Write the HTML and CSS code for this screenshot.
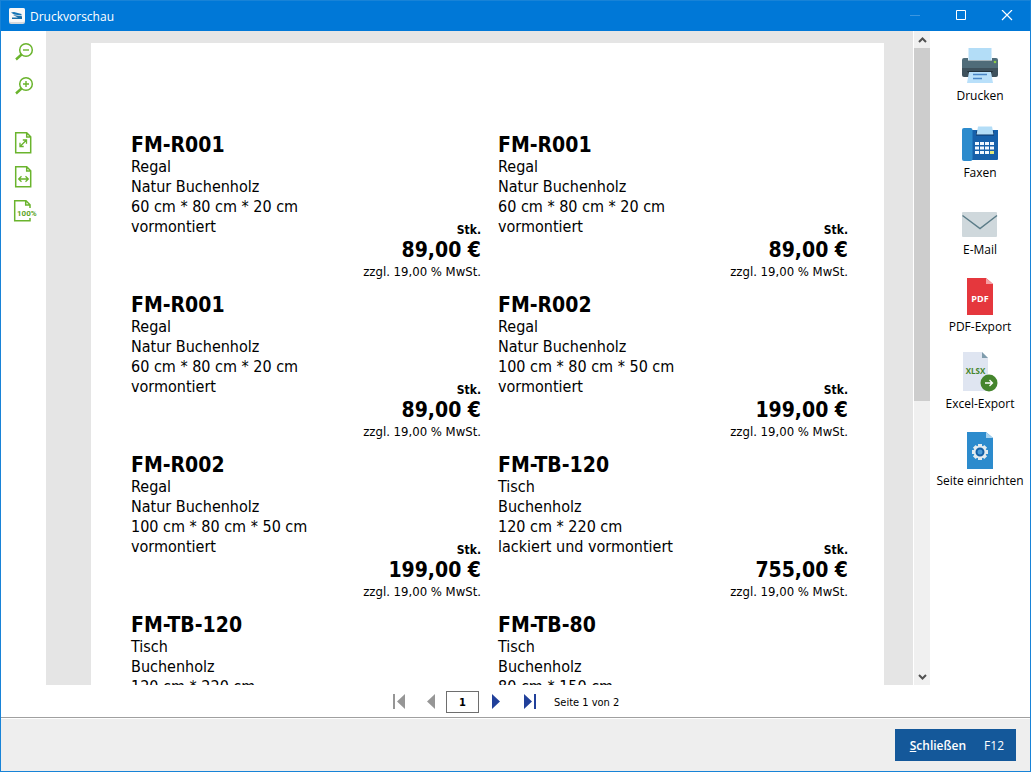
FILE: index.html
```html
<!DOCTYPE html>
<html lang="de">
<head>
<meta charset="utf-8">
<title>Druckvorschau</title>
<link rel="stylesheet" href="styles.css">
</head>
<body>
<div class="window">
  <header class="titlebar">
    <svg class="app-icon" viewBox="0 0 16 16"><rect width="16" height="16" rx="2" fill="#d5d9dc"/><rect width="16" height="14" rx="2" fill="#f8f8f8"/><path d="M2 4.500L5 4l7.500 2v1.500L5 6.500z" fill="#1674b5"/><path d="M4 7l9 1.200V11H3V9.500h6z" fill="#1b6fa8"/></svg>
    <h1 class="title">Druckvorschau</h1>
    <div class="window-controls">
      <button class="window-button" aria-label="Minimieren" disabled><svg viewBox="0 0 12 12"><path d="M1 5.500h10" stroke="#3b96e0"/></svg></button>
      <button class="window-button" aria-label="Maximieren"><svg viewBox="0 0 12 12"><path d="M1.500 .5h9v9h-9z" stroke="#fff"/></svg></button>
      <button class="window-button" aria-label="Fenster schließen"><svg viewBox="0 0 12 12"><path d="M1 0l10 10M11 0L1 10" stroke="#fff" stroke-width="1.200"/></svg></button>
    </div>
  </header>

  <main class="workspace">
    <nav class="zoom-tools" aria-label="Zoom">
      <button class="tool" aria-label="Verkleinern"><svg viewBox="0 0 24 24"><circle cx="14" cy="9" r="6.300" stroke-width="1.500"/><path d="M11 9h6" stroke-width="1.400"/><path d="M9.500 13.500L4 18.500" stroke-width="2.400"/></svg></button>
      <button class="tool" aria-label="Vergrößern"><svg viewBox="0 0 24 24"><circle cx="14" cy="9" r="6.300" stroke-width="1.500"/><path d="M11 9h6M14 6v6" stroke-width="1.400"/><path d="M9.500 13.500L4 18.500" stroke-width="2.400"/></svg></button>
      <button class="tool tool-page" aria-label="Ganze Seite"><svg viewBox="0 0 24 24"><path d="M3.700 1.700h11l4 4v16h-15zM14.700 2v4h4" stroke-width="1.500"/><path d="M8.500 15l5.500-5.500M10.800 9h3.700v3.700M8 11.800v3.700h3.700" stroke-width="1.300"/></svg></button>
      <button class="tool" aria-label="Seitenbreite"><svg viewBox="0 0 24 24"><path d="M3.700 1.700h11l4 4v16h-15zM14.700 2v4h4" stroke-width="1.500"/><path d="M7 14h9M9.500 11.300L6.700 14l2.800 2.700M13.500 11.300l2.800 2.700-2.800 2.700" stroke-width="1.300"/></svg></button>
      <button class="tool" aria-label="Originalgröße"><svg viewBox="0 0 24 24"><path d="M18 9V5.700l-4-4H2.700v20H18V19M13.700 2v4h4" stroke-width="1.500"/><text class="zoom-text" x="5" y="17">100%</text></svg></button>
    </nav>

    <div class="preview">
      <div class="viewport">
        <article class="paper">
          <section class="item">
            <div class="details"><h2 class="sku">FM-R001</h2><p>Regal</p><p>Natur Buchenholz</p><p>60 cm * 80 cm * 20 cm</p><p>vormontiert</p></div>
            <div class="pricing"><p class="unit">Stk.</p><p class="price">89,00 €</p><p class="tax">zzgl. 19,00 % MwSt.</p></div>
          </section>
          <section class="item">
            <div class="details"><h2 class="sku">FM-R001</h2><p>Regal</p><p>Natur Buchenholz</p><p>60 cm * 80 cm * 20 cm</p><p>vormontiert</p></div>
            <div class="pricing"><p class="unit">Stk.</p><p class="price">89,00 €</p><p class="tax">zzgl. 19,00 % MwSt.</p></div>
          </section>
          <section class="item">
            <div class="details"><h2 class="sku">FM-R001</h2><p>Regal</p><p>Natur Buchenholz</p><p>60 cm * 80 cm * 20 cm</p><p>vormontiert</p></div>
            <div class="pricing"><p class="unit">Stk.</p><p class="price">89,00 €</p><p class="tax">zzgl. 19,00 % MwSt.</p></div>
          </section>
          <section class="item">
            <div class="details"><h2 class="sku">FM-R002</h2><p>Regal</p><p>Natur Buchenholz</p><p>100 cm * 80 cm * 50 cm</p><p>vormontiert</p></div>
            <div class="pricing"><p class="unit">Stk.</p><p class="price">199,00 €</p><p class="tax">zzgl. 19,00 % MwSt.</p></div>
          </section>
          <section class="item">
            <div class="details"><h2 class="sku">FM-R002</h2><p>Regal</p><p>Natur Buchenholz</p><p>100 cm * 80 cm * 50 cm</p><p>vormontiert</p></div>
            <div class="pricing"><p class="unit">Stk.</p><p class="price">199,00 €</p><p class="tax">zzgl. 19,00 % MwSt.</p></div>
          </section>
          <section class="item">
            <div class="details"><h2 class="sku">FM-TB-120</h2><p>Tisch</p><p>Buchenholz</p><p>120 cm * 220 cm</p><p>lackiert und vormontiert</p></div>
            <div class="pricing"><p class="unit">Stk.</p><p class="price">755,00 €</p><p class="tax">zzgl. 19,00 % MwSt.</p></div>
          </section>
          <section class="item">
            <div class="details"><h2 class="sku">FM-TB-120</h2><p>Tisch</p><p>Buchenholz</p><p>120 cm * 220 cm</p></div>
          </section>
          <section class="item">
            <div class="details"><h2 class="sku">FM-TB-80</h2><p>Tisch</p><p>Buchenholz</p><p>80 cm * 150 cm</p></div>
          </section>
        </article>
      </div>
      <div class="scrollbar">
        <button class="scroll-button" aria-label="Nach oben"><svg viewBox="0 0 9 6"><path d="M1 5l3.500-3.500L8 5"/></svg></button>
        <div class="track"><div class="thumb"></div></div>
        <button class="scroll-button" aria-label="Nach unten"><svg viewBox="0 0 9 6"><path d="M1 1l3.500 3.500L8 1"/></svg></button>
      </div>
    </div>

    <nav class="pager" aria-label="Seiten">
      <button class="page-button" aria-label="Erste Seite" disabled><svg viewBox="0 0 16 16"><path d="M2 0h2v15H2zM14 0v15L6 7.500z"/></svg></button>
      <button class="page-button" aria-label="Vorherige Seite" disabled><svg viewBox="0 0 16 16"><path d="M12 0v15L4 7.500z"/></svg></button>
      <input class="page-input" aria-label="Seite" value="1">
      <button class="page-button" aria-label="Nächste Seite"><svg viewBox="0 0 16 16"><path d="M4 0v15l8-7.500z"/></svg></button>
      <button class="page-button" aria-label="Letzte Seite"><svg viewBox="0 0 16 16"><path d="M3 0v15l8-7.500zM13 0h2v15h-2z"/></svg></button>
      <span class="page-status">Seite 1 von 2</span>
    </nav>

    <aside class="actions">
      <button class="action"><svg viewBox="0 0 40 44"><path d="M8.500 4h23v12h-23z" fill="#b3ddf7"/><path d="M2 16q0-2 2-2h4v2.500h24V14h4q2 0 2 2v11H2z" fill="#506c79"/><path d="M2 24h36v7q0 2-2 2H4q-2 0-2-2z" fill="#3e515c"/><path d="M7 27h26l-2 3H9z" fill="#22313b"/><path d="M9 28h22l2 11H7z" fill="#b9e0fa"/><path d="M13 30.500h14M13 34.500h9" stroke="#4a86c6" stroke-width="1.500"/><circle cx="35" cy="18" r="1.300" fill="#8ccc45"/></svg><span>Drucken</span></button>
      <button class="action"><svg viewBox="0 0 40 44"><path d="M11 9h27v29q0 1-1 1H11z" fill="#1660aa"/><rect x="2" y="7" width="10.500" height="33" rx="2" fill="#2c8bcd"/><path d="M16 10.500h18V14.500H16z" fill="#0b3566"/><path d="M18 5.500h14l1.500 8h-17z" fill="#b3ddf7"/><path d="M15 21h4v3h-4zM20 21h4v3h-4zM25 21h4v3h-4zM30 21h4v3h-4zM15 25.500h4v3h-4zM20 25.500h4v3h-4zM25 25.500h4v3h-4zM30 25.500h4v3h-4zM15 30h4v3h-4zM20 30h4v3h-4zM25 30h4v3h-4z" fill="#f2f8ff"/><path d="M30 30h4v3h-4z" fill="#e3e77b"/></svg><span>Faxen</span></button>
      <button class="action"><svg viewBox="0 0 40 44"><rect x="2" y="14" width="35" height="25" rx="1" fill="#cfd8dc"/><path d="M2.500 17.500L20 30.500l17-13" fill="none" stroke="#5b7c88" stroke-width="1.500"/></svg><span>E-Mail</span></button>
      <button class="action"><svg viewBox="0 0 40 44"><path d="M7 3h19l7 6v31H7z" fill="#e5373d"/><path d="M26 3l7 6h-7z" fill="#f59fa4"/><text class="pdf-text" x="20" y="27">PDF</text></svg><span>PDF-Export</span></button>
      <button class="action"><svg viewBox="0 0 40 44"><path d="M3 0h19l6 6v33H3z" fill="#dfe5f1"/><path d="M22 0l6 6h-6z" fill="#7f9cac"/><text class="xlsx-text" x="15.500" y="22">XLSX</text><circle cx="29" cy="31" r="8.500" fill="#45852d"/><path d="M25 31h7.500M29.500 28l3 3-3 3" fill="none" stroke="#fff" stroke-width="1.300"/></svg><span>Excel-Export</span></button>
      <button class="action"><svg viewBox="0 0 40 44"><path d="M7 3h19l7 6v31H7z" fill="#2c8bcd"/><path d="M26 3l7 6h-7z" fill="#a6d2ef"/><path d="M20 15v16M12 23h16M14.300 17.300l11.400 11.400M25.700 17.300L14.300 28.700" stroke="#e3ebef" stroke-width="4"/><circle cx="20" cy="23" r="6.500" fill="#e3ebef"/><circle cx="20" cy="23" r="3.500" fill="#4b9cd8" stroke="#1460a5" stroke-width="2"/></svg><span>Seite einrichten</span></button>
    </aside>
  </main>

  <footer class="footer">
    <button class="close-button"><span class="close-label"><u>S</u>chließen</span><kbd>F12</kbd></button>
  </footer>
</div>
</body>
</html>
```
FILE: styles.css
```css
* { box-sizing: border-box; }
body, h1, h2, p { margin: 0; }
body { font-family: "Open Sans", "Noto Sans", sans-serif; font-size: 12px; color: #000; }
button { padding: 0; border: 0; background: none; font: inherit; color: inherit; }
svg { display: block; }

.window {
  height: 100vh;
  display: flex;
  flex-direction: column;
  border: 1px solid #1883d7;
  background: #fff;
  overflow: hidden;
}

.titlebar {
  flex: none;
  height: 30px;
  display: flex;
  align-items: center;
  gap: 5px;
  padding-left: 8px;
  background: #0078d7;
  color: #fff;
}
.app-icon { width: 16px; height: 16px; }
.title { font-size: 12px; font-weight: 400; }
.window-controls { display: flex; margin-left: auto; }
.window-button { width: 46px; height: 30px; display: grid; place-items: center; }
.window-button svg { width: 12px; height: 12px; fill: none; }

.workspace {
  flex: 1;
  min-height: 0;
  display: grid;
  grid-template-columns: 45px 1fr 100px;
  grid-template-rows: 1fr 32px;
}

.zoom-tools {
  display: flex;
  flex-direction: column;
  align-items: center;
  gap: 10px;
  padding-top: 10px;
}
.tool { width: 24px; height: 24px; }
.tool svg { width: 24px; height: 24px; fill: none; stroke: #6ab42d; overflow: visible; }
.tool-page { margin-top: 22px; }
.tool .zoom-text { fill: #5ba51f; stroke: none; font: 700 8px Roboto, sans-serif; }

.preview { min-width: 0; min-height: 0; display: flex; background: #e5e5e5; }
.viewport { flex: 1; overflow: hidden; padding: 12px 29px 0 45px; }
.paper {
  display: grid;
  grid-template-columns: 1fr 1fr;
  grid-auto-rows: 160px;
  column-gap: 17px;
  padding: 90px 36px 40px 40px;
  background: #fff;
  font-family: "DejaVu Sans Condensed", "DejaVu Sans", sans-serif;
  font-size: 16px;
  line-height: 20px;
}
.item { display: flex; justify-content: space-between; }
.details { white-space: nowrap; }
.pricing { padding-top: 89px; text-align: right; white-space: nowrap; }
.sku, .price { font-size: 21px; line-height: 24px; font-weight: 700; }
.unit { font-size: 12px; line-height: 16px; font-weight: 700; }
.tax { font-size: 13px; line-height: 20px; }

.scrollbar {
  flex: none;
  width: 17px;
  display: flex;
  flex-direction: column;
  background: #f0f0f0;
  border-left: 1px solid #fff;
}
.scroll-button { height: 17px; display: grid; place-items: center; }
.scroll-button svg { width: 9px; height: 6px; fill: none; stroke: #505050; stroke-width: 2; }
.track { flex: 1; }
.thumb { height: 57%; background: #cdcdcd; }

.pager {
  grid-column: 1 / 3;
  display: flex;
  align-items: center;
  padding: 2px 0 0 390px;
  font-family: "DejaVu Sans Condensed", "DejaVu Sans", sans-serif;
  font-size: 11px;
}
.page-button { width: 16px; height: 16px; margin-right: 17px; }
.page-button svg { width: 16px; height: 16px; fill: #21409a; }
.page-button:disabled { margin-right: 16px; }
.page-button:disabled svg { fill: #969696; }
.page-button:disabled + .page-input { margin: 0 9px 0 -9px; }
.page-input {
  width: 33px;
  height: 22px;
  padding: 0;
  border: 1px solid #6e6e6e;
  background: #fff;
  text-align: center;
  font: inherit;
  font-weight: 700;
}
.page-status { white-space: nowrap; }

.actions {
  grid-column: 3;
  grid-row: 1 / 3;
  display: flex;
  flex-direction: column;
  gap: 17px;
  padding-top: 13px;
}
.action {
  display: flex;
  flex-direction: column;
  align-items: center;
  line-height: 16px;
  white-space: nowrap;
}
.action svg { width: 40px; height: 44px; }
.pdf-text, .xlsx-text { font-weight: 700; text-anchor: middle; }
.pdf-text { font-size: 9px; fill: #fff; }
.xlsx-text { font-size: 8px; fill: #45852d; }

.footer {
  flex: none;
  display: flex;
  justify-content: flex-end;
  padding: 11px 14px 10px;
  border-top: 1px solid #a0a0a0;
  box-shadow: inset 0 1px #fff;
  background: #eee;
}
.close-button {
  height: 32px;
  display: flex;
  align-items: center;
  gap: 18px;
  padding: 0 12px 0 15px;
  background: #14589a;
  color: #fff;
}
.close-label { font-size: 12px; font-weight: 600; }
.close-button kbd { font: inherit; }
```
